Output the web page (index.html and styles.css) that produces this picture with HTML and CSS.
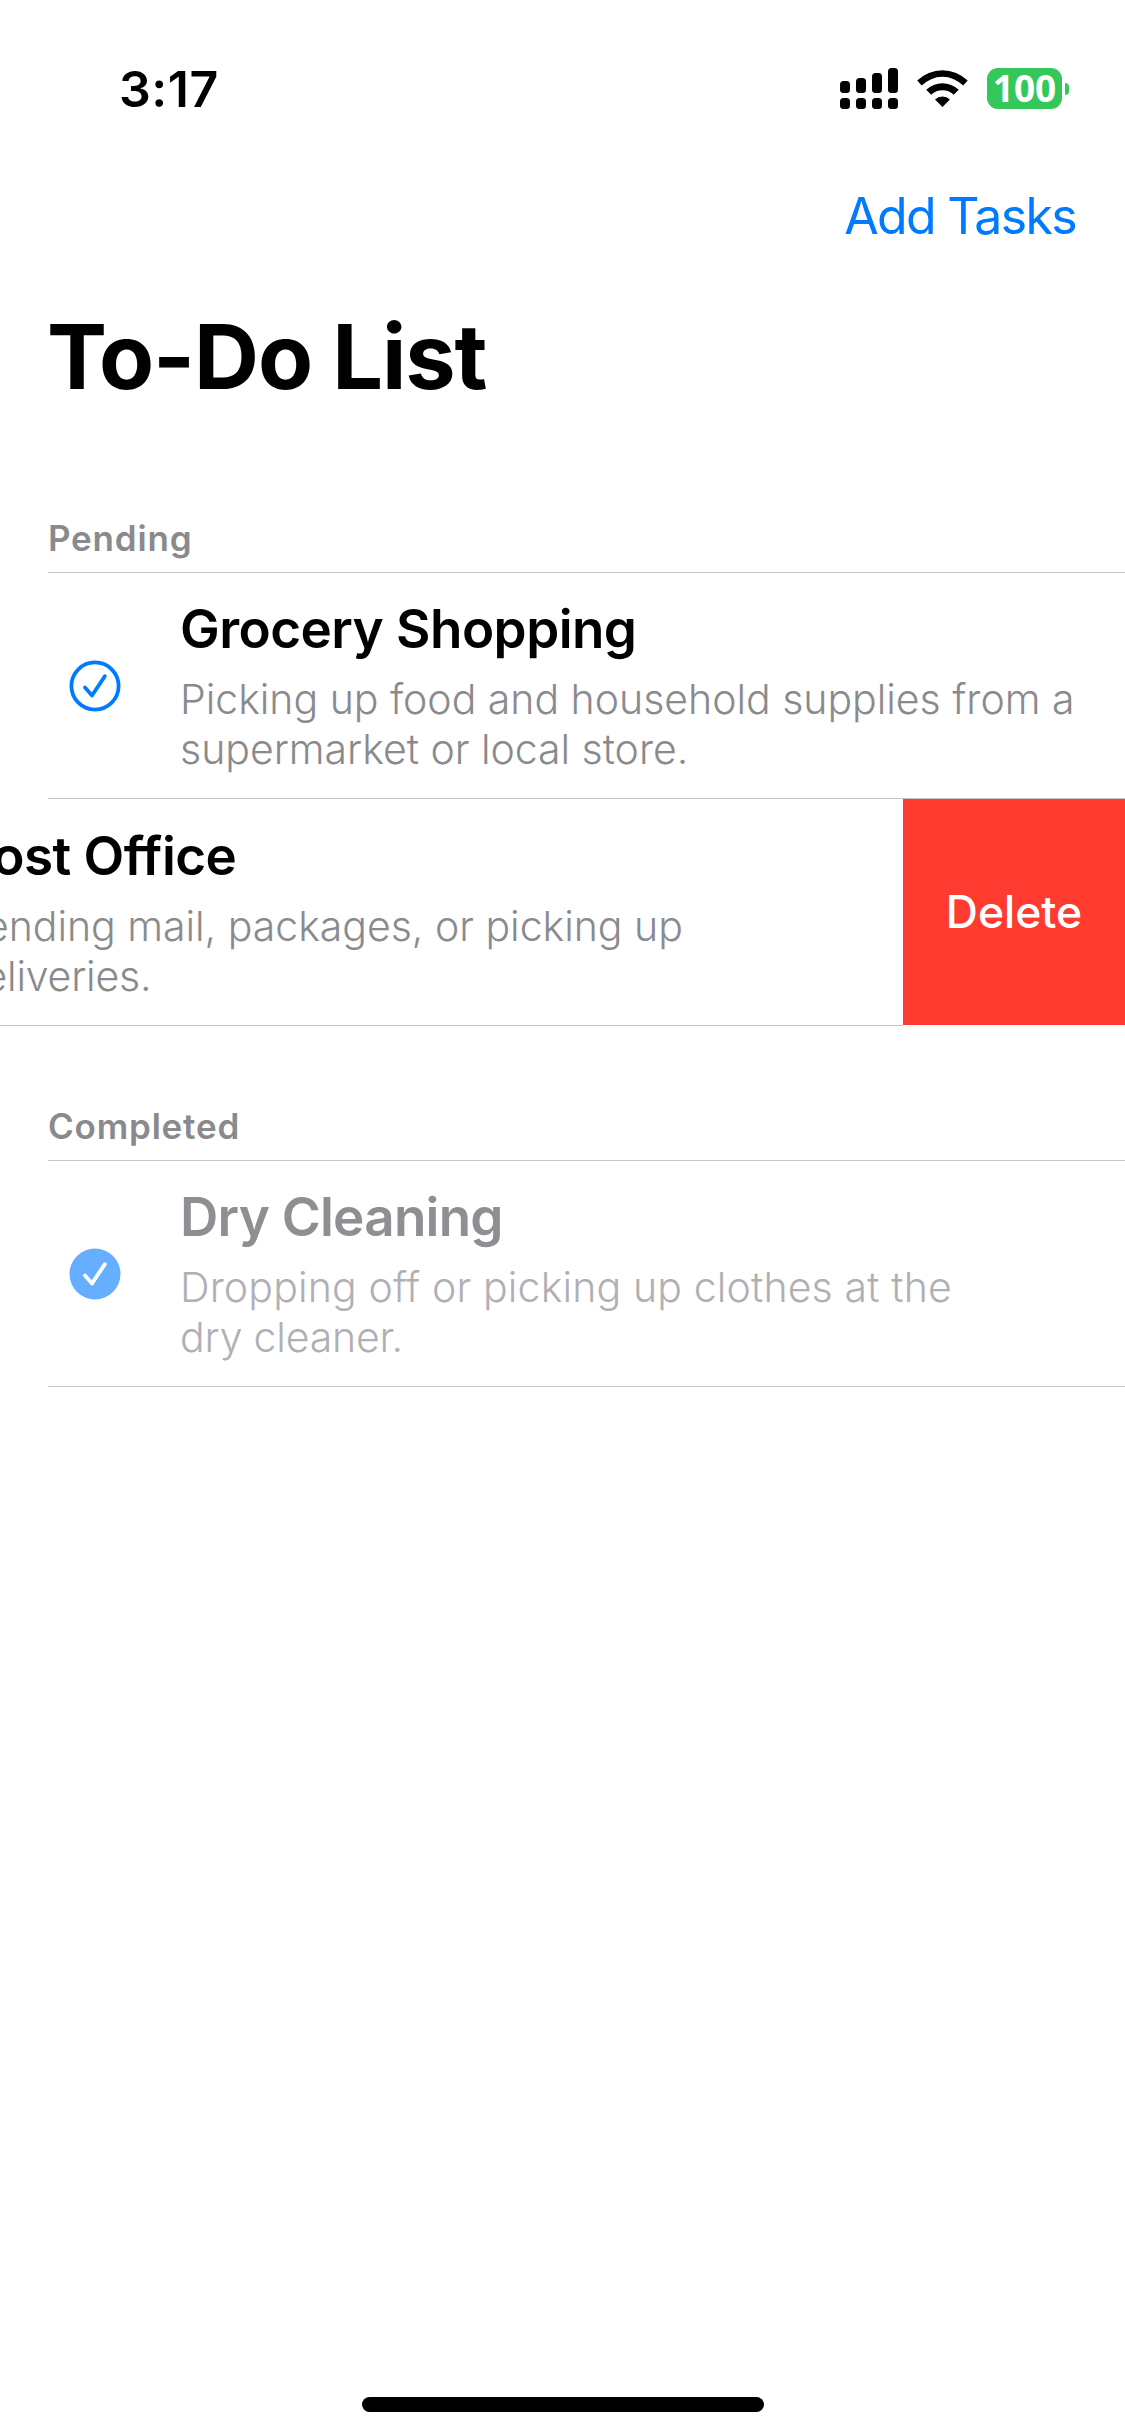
FILE: index.html
```html
<!DOCTYPE html>
<html lang="en">
<head>
<meta charset="utf-8">
<title>To-Do List</title>
<link rel="stylesheet" href="styles.css">
</head>
<body>
<div class="screen">
  <header class="status-bar">
    <span class="time">3:17</span>
    <div class="indicators">
      <svg class="signal" viewBox="0 0 58 42" width="58" height="42">
        <rect x="0" y="13" width="10" height="12" rx="3.5"/><rect x="16" y="10" width="10" height="15" rx="3.5"/><rect x="32" y="5" width="10" height="20" rx="3.5"/><rect x="48" y="0" width="10" height="25" rx="3.5"/>
        <rect x="0" y="30" width="10" height="11" rx="3.5"/><rect x="16" y="30" width="10" height="11" rx="3.5"/><rect x="32" y="30" width="10" height="11" rx="3.5"/><rect x="48" y="30" width="10" height="11" rx="3.5"/>
      </svg>
      <svg class="wifi" viewBox="0 0 52 42" width="52" height="42">
        <path d="M.2 12.600A36 36 0 0 1 50.700 12.600L46.200 17.600A29 29 0 0 0 4.700 17.600Z"/>
        <path d="M9.200 21.800A23.500 23.500 0 0 1 41.700 21.800L36.700 26.800A16.500 16.500 0 0 0 14.200 26.800Z"/>
        <path d="M18 31.400A11 11 0 0 1 32.900 31.400L25.500 39Z"/>
      </svg>
      <div class="battery"><div class="battery-body">100</div><div class="battery-cap"></div></div>
    </div>
  </header>
  <nav class="nav-bar"><a class="add">Add Tasks</a></nav>
  <h1 class="page-title">To-Do List</h1>
  <section class="group">
    <h2 class="group-name">Pending</h2>
    <article class="task">
      <svg class="check" viewBox="-26 -26 52 52" width="52" height="52"><circle r="23.600"/><path d="M-10 1.500L-3 9.500L9.800-9.800"/></svg>
      <div class="task-text">
        <h3>Grocery Shopping</h3>
        <p>Picking up food and household supplies from a<br>supermarket or local store.</p>
      </div>
    </article>
    <div class="swiped">
      <article class="swiped-content">
        <div class="task-text">
          <h3>Post Office</h3>
          <p>Sending mail, packages, or picking up<br><span class="tight">deliveries.</span></p>
        </div>
      </article>
      <button class="delete">Delete</button>
    </div>
  </section>
  <section class="group done">
    <h2 class="group-name">Completed</h2>
    <article class="task">
      <svg class="check" viewBox="-26 -26 52 52" width="52" height="52"><circle r="25.500"/><path d="M-10 1.500L-3 9.500L9.800-9.800"/></svg>
      <div class="task-text">
        <h3>Dry Cleaning</h3>
        <p><span class="loose">Dropping off or picking up clothes at the</span><br><span class="tight">dry cleaner.</span></p>
      </div>
    </article>
  </section>
  <div class="home-indicator"></div>
</div>
</body>
</html>
```

FILE: styles.css
```css
* { box-sizing: border-box; margin: 0; padding: 0; }
body { background: #fff; color: #000; font-family: Inter, "Liberation Sans", sans-serif; }
.screen { width: 1125px; height: 2436px; display: flex; flex-direction: column; overflow: hidden; }
.status-bar { height: 186px; padding: 59px 56px 0 119px; display: flex; justify-content: space-between; align-items: flex-start; }
.time { font-size: 50px; line-height: 60px; font-weight: 600; letter-spacing: 0.5px; }
.indicators { display: flex; padding-top: 9px; }
.signal { margin-right: 19px; }
.wifi { margin-right: 18px; }
.battery { display: flex; align-items: center; gap: 3px; height: 41px; }
.battery-body { width: 75px; height: 41px; border-radius: 11px; background: #34c759; color: #fff; font: 700 37px/39px "Open Sans", "Noto Sans", sans-serif; display: flex; justify-content: center; }
.battery-cap { width: 4px; height: 12px; border-radius: 0 6px 6px 0; background: #34c759; }
.nav-bar { height: 116px; padding-right: 49px; display: flex; justify-content: flex-end; }
.add { font-size: 50px; line-height: 60px; letter-spacing: -1.650px; color: #007aff; }
.page-title { height: 110px; padding-left: 47px; font-size: 90px; line-height: 110px; font-weight: 700; letter-spacing: -1.100px; }
.group { margin-top: 105px; }
.done { margin-top: 79px; }
.group-name { margin-left: 48px; height: 56px; border-bottom: 1px solid #c4c4c6; font-size: 35px; line-height: 42px; font-weight: 600; letter-spacing: 0.800px; color: #8a8a8e; }
.task { margin-left: 48px; height: 226px; border-bottom: 1px solid #c4c4c6; display: flex; padding-top: 24px; }
.check { margin: 63px 59px 0 21px; fill: none; stroke: #007aff; stroke-width: 3.800; stroke-linecap: round; stroke-linejoin: round; flex: none; }
.task-text { white-space: nowrap; }
h3 { font-size: 53px; line-height: 64px; font-weight: 600; letter-spacing: -0.550px; }
p { margin-top: 13px; font-size: 41px; line-height: 50px; font-weight: 300; letter-spacing: -0.020px; color: #8a8a8e; }
.tight { letter-spacing: -0.200px; }
.loose { letter-spacing: 0.150px; }
.swiped { display: flex; height: 227px; align-items: flex-start; }
.swiped-content { width: 903px; height: 227px; padding-top: 25px; border-bottom: 1px solid #c4c4c6; overflow: hidden; }
.swiped-content .task-text { margin-left: -41px; }
.delete { width: 222px; height: 226px; border: 0; background: #ff3b30; color: #fff; font: 450 44.500px/60px Inter, "Liberation Sans", sans-serif; }
.done .check circle { fill: #66afff; stroke: none; }
.done .check path { stroke: #fff; }
.done h3 { color: #8e8e93; letter-spacing: -0.750px; }
.done p { color: #b0b0b4; }
.home-indicator { width: 402px; height: 15px; margin: auto auto 24px 362px; border-radius: 8px; background: #000; }
```
